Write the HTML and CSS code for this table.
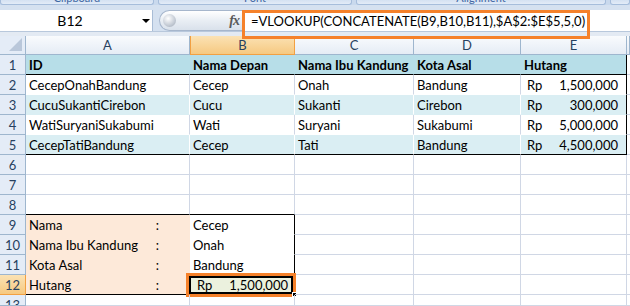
FILE: index.html
```html
<!DOCTYPE html>
<html>
<head>
<meta charset="utf-8">
<title>Book1 - VLOOKUP</title>
<link rel="stylesheet" href="styles.css">
</head>
<body>
<div class="app">
  <div class="ribbon">
    <div class="grp g1"><span>Clipboard</span></div>
    <div class="grp g2"><span>Font</span></div>
    <div class="grp g3"><span>Alignment</span></div>
    <div class="grp g4"></div>
  </div>

  <div class="fbar">
    <div class="namebox"><span class="ref">B12</span><span class="drop"></span></div>
    <div class="pill"><span class="knob"></span><span class="fx">fx</span></div>
    <div class="formula">=VLOOKUP(CONCATENATE(B9,B10,B11),$A$2:$E$5,5,0)</div>
    <div class="mark fmark"></div>
  </div>
  <div class="sep"></div>

  <div class="sheet">
    <div class="corner"></div>
    <div class="ch">A</div><div class="ch on">B</div><div class="ch">C</div><div class="ch">D</div><div class="ch">E</div><div class="ch"></div>

    <div class="rh">1</div>
    <div class="c th">ID</div><div class="c th">Nama Depan</div><div class="c th">Nama Ibu Kandung</div><div class="c th">Kota Asal</div><div class="c th rb">Hutang</div><div class="c"></div>

    <div class="rh">2</div>
    <div class="c tw">CecepOnahBandung</div><div class="c tw">Cecep</div><div class="c tw">Onah</div><div class="c tw">Bandung</div><div class="c tw rb acc"><span>Rp</span><span>1,500,000</span></div><div class="c"></div>

    <div class="rh">3</div>
    <div class="c tb">CucuSukantiCirebon</div><div class="c tb">Cucu</div><div class="c tb">Sukanti</div><div class="c tb">Cirebon</div><div class="c tb rb acc"><span>Rp</span><span>300,000</span></div><div class="c"></div>

    <div class="rh">4</div>
    <div class="c tw">WatiSuryaniSukabumi</div><div class="c tw">Wati</div><div class="c tw">Suryani</div><div class="c tw">Sukabumi</div><div class="c tw rb acc"><span>Rp</span><span>5,000,000</span></div><div class="c"></div>

    <div class="rh">5</div>
    <div class="c tb bb">CecepTatiBandung</div><div class="c tb bb">Cecep</div><div class="c tb bb">Tati</div><div class="c tb bb">Bandung</div><div class="c tb bb rb acc"><span>Rp</span><span>4,500,000</span></div><div class="c"></div>

    <div class="rh">6</div>
    <div class="c"></div><div class="c"></div><div class="c"></div><div class="c"></div><div class="c"></div><div class="c"></div>

    <div class="rh">7</div>
    <div class="c"></div><div class="c"></div><div class="c"></div><div class="c"></div><div class="c"></div><div class="c"></div>

    <div class="rh">8</div>
    <div class="c bb"></div><div class="c bb"></div><div class="c"></div><div class="c"></div><div class="c"></div><div class="c"></div>

    <div class="rh">9</div>
    <div class="c lab"><span>Nama</span><span>:</span></div><div class="c val rb">Cecep</div><div class="c"></div><div class="c"></div><div class="c"></div><div class="c"></div>

    <div class="rh">10</div>
    <div class="c lab"><span>Nama Ibu Kandung</span><span>:</span></div><div class="c val rb">Onah</div><div class="c"></div><div class="c"></div><div class="c"></div><div class="c"></div>

    <div class="rh">11</div>
    <div class="c lab"><span>Kota Asal</span><span>:</span></div><div class="c val rb">Bandung</div><div class="c"></div><div class="c"></div><div class="c"></div><div class="c"></div>

    <div class="rh on">12</div>
    <div class="c lab bb"><span>Hutang</span><span>:</span></div>
    <div class="c cur rb bb acc"><span>Rp</span><span>1,500,000</span><i class="mark cmark"></i><i class="handle"></i></div>
    <div class="c"></div><div class="c"></div><div class="c"></div><div class="c"></div>

    <div class="rh">13</div>
    <div class="c"></div><div class="c"></div><div class="c"></div><div class="c"></div><div class="c"></div><div class="c"></div>
  </div>
</div>
</body>
</html>
```

FILE: styles.css
```css
* { box-sizing: border-box; }

html, body {
  margin: 0;
  padding: 0;
  width: 630px;
  height: 306px;
  overflow: hidden;
  background: #ffffff;
}

.app {
  width: 630px;
  height: 306px;
  overflow: hidden;
  font-family: Lato, "Open Sans", sans-serif;
  font-size: 13px;
  color: #000;
}

/* ribbon group captions, mostly scrolled out of view */
.ribbon {
  display: flex;
  gap: 4px;
  height: 5px;
  background: #c9d9ed;
  overflow: hidden;
}
.grp {
  flex-shrink: 0;
  height: 5px;
  background: linear-gradient(#d4e1f2, #e3ecf8);
  border: 1px solid #a6bddb;
  border-top: none;
  border-radius: 0 0 3px 3px;
  overflow: hidden;
  text-align: center;
  font-size: 11px;
  color: #3f67a3;
}
.grp span { display: block; line-height: 11px; margin-top: -8px; }
.g1 { width: 154px; }
.g2 { width: 194px; }
.g3 { width: 250px; }
.g4 { flex: 1; }

/* formula bar */
.fbar {
  position: relative;
  display: flex;
  height: 26px;
  padding-top: 5px;
  background: #d5e1f0;
}
.namebox {
  position: relative;
  flex-shrink: 0;
  width: 153px;
  background: #fff;
  border-right: 1px solid #a9bdd6;
  text-align: center;
  line-height: 22px;
  font-size: 14px;
}
.namebox .ref { position: relative; left: -6px; }
.drop {
  position: absolute;
  right: 2px;
  top: 9px;
  width: 0;
  height: 0;
  border-left: 4px solid transparent;
  border-right: 4px solid transparent;
  border-top: 4px solid #000;
}
.pill {
  position: relative;
  flex-shrink: 0;
  margin-left: 6px;
  width: 83px;
  height: 21px;
  border: 1px solid #a6b6cc;
  border-right: none;
  border-radius: 11px 0 0 11px;
  background: linear-gradient(#ffffff, #e9eef4 50%, #d9e1eb);
}
.knob {
  position: absolute;
  left: 3px;
  top: 3px;
  width: 13px;
  height: 13px;
  border-radius: 50%;
  background: radial-gradient(circle at 40% 35%, #ffffff, #c3cad4 60%, #9aa4b0);
}
.fx {
  position: absolute;
  right: 3px;
  top: 0;
  font-family: "Liberation Serif", "DejaVu Serif", serif;
  font-style: italic;
  font-weight: bold;
  font-size: 14px;
  line-height: 19px;
  color: #5a5a5a;
  letter-spacing: -1px;
}
.formula {
  flex: 1;
  min-width: 0;
  background: #fff;
  padding-left: 9px;
  line-height: 22px;
  font-size: 13px;
  white-space: nowrap;
}

/* orange call-out frames */
.mark {
  position: absolute;
  border: 3px solid #f5812a;
  pointer-events: none;
}
.fmark {
  left: 242px;
  top: 5px;
  width: 348px;
  height: 29px;
}

.sep {
  height: 5px;
  background: #e3eaf3;
  border-top: 1px solid #b8c8dc;
}

/* worksheet grid */
.sheet {
  display: grid;
  grid-template-columns: 26px 164px 105px 119px 107px 106px 3px;
  grid-template-rows: 19px repeat(12, 20px) 11px;
}
.corner {
  position: relative;
  background: #e4ecf7;
  border-right: 1px solid #9eb6ce;
  border-bottom: 1px solid #9eb6ce;
}
.corner::after {
  content: "";
  position: absolute;
  right: 3px;
  bottom: 3px;
  border-left: 13px solid transparent;
  border-bottom: 13px solid #b9c7da;
}
.ch {
  background: linear-gradient(#f9fbfd, #e5ecf5);
  border-right: 1px solid #9eb6ce;
  border-bottom: 1px solid #9eb6ce;
  text-align: center;
  line-height: 19px;
  color: #27415f;
}
.ch.on {
  background: linear-gradient(#fbe2b4, #f6c981);
  border: 1px solid #f2a042;
  border-top: none;
}
.rh {
  background: #e4ecf7;
  border-right: 1px solid #9eb6ce;
  border-bottom: 1px solid #9eb6ce;
  text-align: center;
  line-height: 21px;
  color: #27415f;
  overflow: hidden;
}
.rh.on {
  background: linear-gradient(#fbe2b4, #f6c981);
  border-right-color: #f2a042;
  border-bottom-color: #f2a042;
}

.c {
  border-right: 1px solid #d0d7e5;
  border-bottom: 1px solid #d0d7e5;
  padding: 0 3px;
  line-height: 21px;
  white-space: nowrap;
  position: relative;
}

/* data table */
.th { background: #b7dee8; font-weight: bold; border-right-color: #b7dee8; border-bottom: 1px solid #000; }
.tw { background: #fff; border-right-color: #d0d7e5; border-bottom-color: #fff; }
.tb { background: #daeef3; border-right-color: #fff; border-bottom-color: #daeef3; }
.rb { border-right: 1px solid #000 !important; }
.bb { border-bottom: 1px solid #000 !important; }

.acc {
  display: flex;
  justify-content: space-between;
  padding: 0 8px 0 6px;
}

/* lookup result block */
.lab {
  background: #fde9d9;
  border-right-color: #fde9d9;
  border-bottom-color: #fde9d9;
  display: flex;
  justify-content: space-between;
  padding-right: 30px;
}
.val { background: #fff; border-bottom-color: #fff; }

.cur {
  background: #ebf1de;
  padding: 0 6px 0 7px;
}
.cmark {
  left: -4px;
  top: -2px;
  right: -2px;
  bottom: -3px;
  box-shadow: inset 0 0 0 2px #000;
}
.handle {
  position: absolute;
  right: -3px;
  bottom: -3px;
  width: 5px;
  height: 5px;
  background: #000;
  border: 1px solid #fff;
}
```
